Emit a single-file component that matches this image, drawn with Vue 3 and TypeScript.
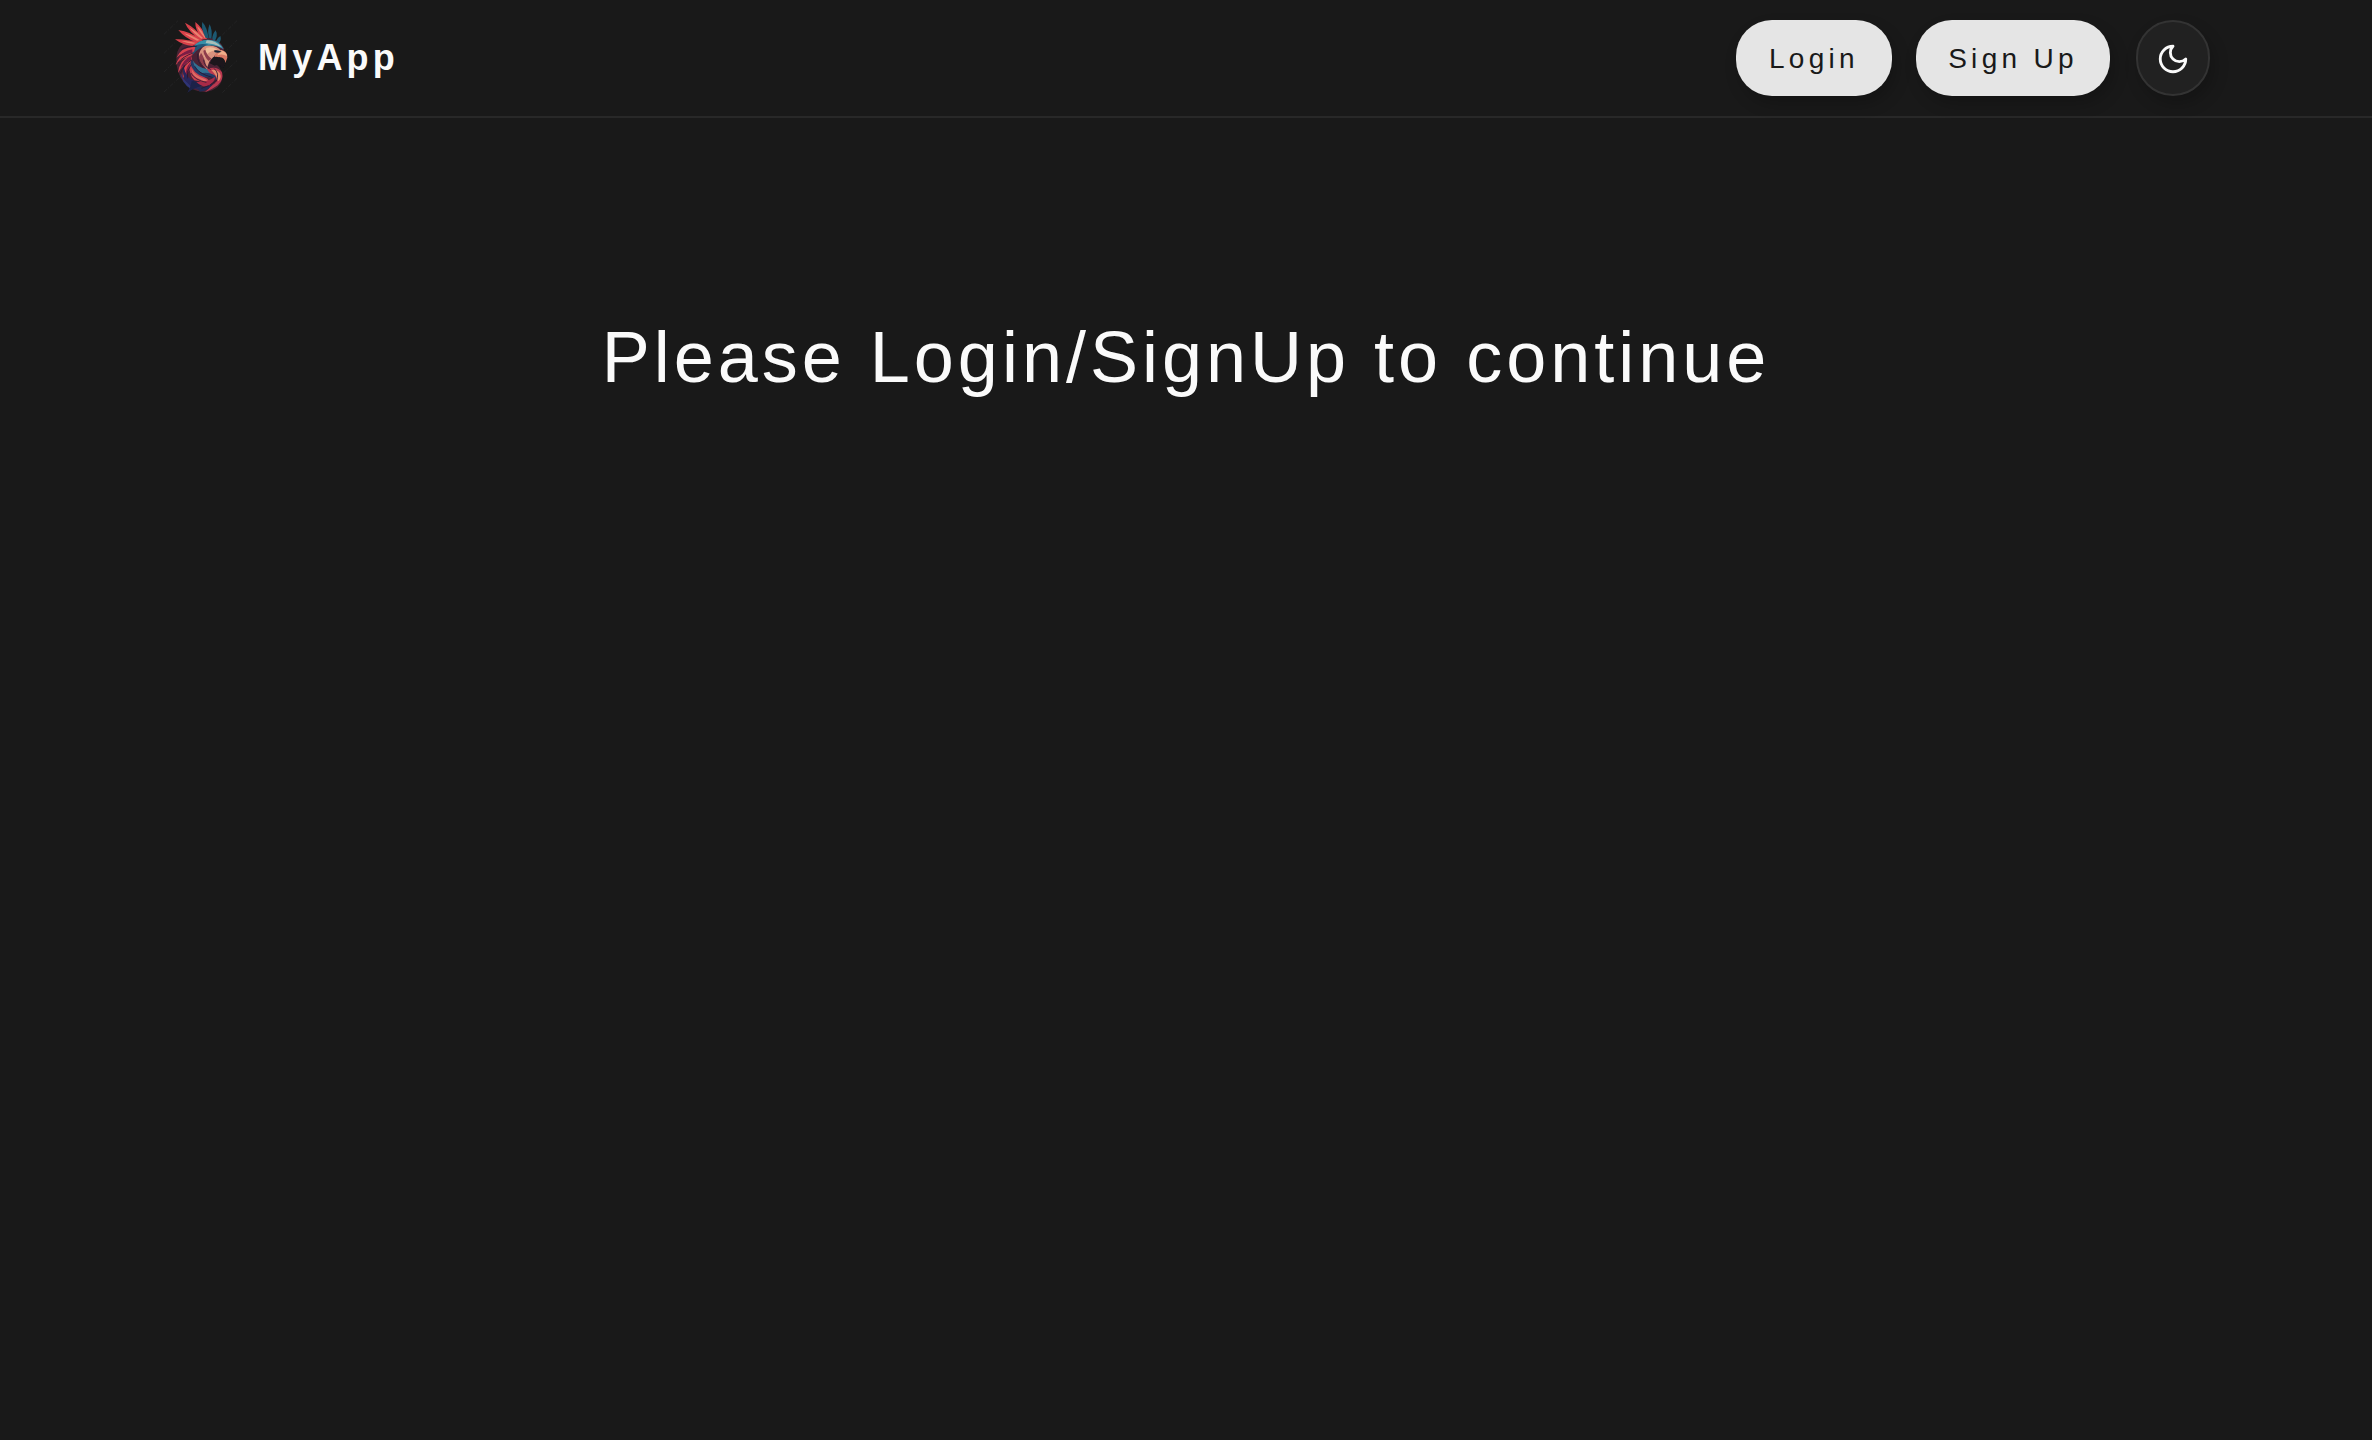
<script setup lang="ts">
interface Action {
  id: string
  label: string
}

const appName = 'MyApp'
const actions: Action[] = [
  { id: 'login', label: 'Login' },
  { id: 'signup', label: 'Sign Up' },
]
</script>

<template>
  <div class="page">
    <header class="navbar">
      <a class="brand">
        <svg class="logo" viewBox="21 30 228 228" aria-hidden="true">
          <defs>
            <filter id="soft" x="-10%" y="-10%" width="120%" height="120%">
              <feGaussianBlur stdDeviation="2" />
            </filter>
          </defs>
          <g stroke="#29292b" stroke-width="2" stroke-dasharray="12 5 3 5">
            <path d="M27 73 69 32M27 130 61 97M27 186 58 155M27 246 73 203M202 75 246 32M205 130 246 90M205 189 246 152M202 248 246 205" />
          </g>
          <g filter="url(#soft)">
            <path fill="#4b2335" d="M82 103Q112 78 154 82Q193 86 208 116L199 145Q180 137 167 151Q205 172 202 203Q197 238 151 246Q106 244 85 215Q65 190 64 151Q64 118 82 103Z" />
            <path fill="#d8414a" d="M137 90Q100 65 90 38Q120 53 148 87ZM144 88Q119 60 121 36Q143 53 156 87ZM126 98Q91 86 70 60Q105 64 143 92ZM112 108Q84 106 60 88Q93 86 131 99Z" />
            <path fill="#e98370" d="M139 86Q113 68 104 53Q124 63 144 84ZM149 84Q128 60 127 49Q141 61 153 85ZM126 92Q105 83 87 70Q109 75 134 90ZM115 101Q95 99 80 93Q97 92 122 99Z" />
            <path fill="#1f5871" d="M152 84Q137 56 142 36Q156 51 161 85ZM162 83Q156 61 164 43Q173 61 169 86ZM172 87Q172 72 182 61Q190 76 179 94ZM183 94Q188 82 196 78Q201 91 190 101Z" />
            <path fill="#3890a8" d="M116 110Q135 84 173 91Q194 94 206 118Q182 102 154 108Q128 105 111 122Z" />
            <path fill="#a8beb9" d="M155 91Q180 89 199 111Q176 100 152 99Z" />
            <path fill="#215476" d="M104 120Q123 96 160 104Q131 111 113 134Z" />
            <path fill="#d8434f" d="M121 111Q82 108 64 143Q86 123 117 125ZM113 124Q75 127 62 165Q83 143 112 136ZM108 136Q74 149 69 188Q86 161 111 149ZM105 149Q80 170 83 207Q93 181 112 164Z" />
            <path fill="#7c1f45" d="M112 118Q86 122 70 143Q94 131 112 128ZM107 137Q83 150 76 177Q94 157 109 149ZM106 157Q90 176 92 201Q101 181 114 171Z" />
            <path fill="#d9927e" d="M150 108Q184 103 199 123Q182 129 175 143Q158 151 157 180Q133 158 132 132Q136 115 150 108Z" />
            <path fill="#efbb98" d="M155 113Q177 109 187 120Q159 122 149 142Q145 124 155 113Z" />
            <path fill="#8e3c4b" d="M138 128Q148 142 153 166L162 180Q137 165 132 143ZM151 119Q155 136 170 146L161 153Q147 139 145 122Z" />
            <path fill="#d87864" d="M199 120Q218 125 217 143L211 159Q210 143 193 141L182 151Q177 138 181 132Z" />
            <path fill="#efad89" d="M198 121Q215 126 216 138Q202 130 187 136Z" />
            <path fill="#172333" d="M178 121Q191 119 200 125Q188 131 178 126Z" />
            <path fill="#1a181d" d="M174 142Q187 137 202 146Q207 151 211 160L204 174Q190 161 179 167L164 160Z" />
            <path fill="#243b68" d="M111 147Q116 177 158 184Q185 188 190 213Q165 197 139 202Q112 187 105 163Z" />
            <path fill="#337092" d="M113 151Q125 172 158 178Q179 181 188 197Q163 185 142 189Q119 181 113 151Z" />
            <path fill="#c93f51" d="M105 157Q112 190 148 202Q168 208 166 234Q145 213 118 211Q99 191 105 157Z" />
            <path fill="#df6c64" d="M110 177Q119 197 151 208Q162 215 161 223Q143 210 122 202Q110 192 110 177Z" />
            <path fill="#26265b" d="M86 162Q86 190 106 207Q128 213 142 241Q115 239 96 220Q78 196 86 162Z" />
            <path fill="#2d3576" d="M74 177Q79 205 104 225L111 240Q79 222 74 177Z" />
            <path fill="#b93850" d="M156 177Q187 166 201 187Q207 210 188 226Q170 239 150 247Q167 228 181 219Q190 199 173 193Q163 192 156 177Z" />
            <path fill="#e5896c" d="M169 180Q187 177 195 190Q201 206 189 214Q187 199 169 180Z" />
            <path fill="#1d244a" d="M110 214Q137 212 149 227Q127 227 97 248Q108 230 110 214Z" />
            <path fill="#a82c47" d="M124 216Q155 218 181 200Q178 220 154 229Q141 231 124 216Z" />
            <path fill="#202b55" d="M127 231Q157 235 174 218Q165 242 134 245Z" />
            <g fill="none" stroke="#2a1730" stroke-width="2.5" stroke-linecap="round">
              <path d="M80 118Q96 108 124 109M69 158Q84 139 112 130M76 190Q87 164 108 151M97 204Q94 182 108 164M120 170Q130 192 172 202M146 150Q147 168 166 178M128 132Q125 154 143 172M178 176Q195 190 184 214M108 190Q121 211 153 217M140 235Q166 228 184 212" />
            </g>
          </g>
        </svg>
        <span class="name">{{ appName }}</span>
      </a>
      <nav class="actions">
        <button v-for="action in actions" :key="action.id" class="pill" :class="action.id" type="button">{{ action.label }}</button>
        <button class="toggle" type="button" aria-label="Toggle theme">
          <svg class="moon" viewBox="0 0 24 24" fill="none" stroke="currentColor" stroke-width="2" stroke-linecap="round" stroke-linejoin="round">
            <path d="M12 3a6 6 0 0 0 9 9 9 9 0 1 1-9-9Z" />
          </svg>
        </button>
      </nav>
    </header>
    <main class="content">
      <h1 class="message">Please Login/SignUp to continue</h1>
    </main>
  </div>
</template>

<style>
body {
  background: #191919;
}
</style>

<style scoped>
.page {
  min-height: 1440px;
  background: #191919;
  color: #fafafa;
  font-family: "Liberation Sans", Arial, sans-serif;
}
.navbar {
  box-sizing: border-box;
  height: 118px;
  padding: 0 162px;
  display: flex;
  align-items: center;
  justify-content: space-between;
  border-bottom: 2px solid #282828;
}
.brand {
  display: flex;
  align-items: center;
  gap: 20px;
}
.logo {
  width: 76px;
  height: 76px;
}
.name {
  font-size: 36px;
  font-weight: 700;
  letter-spacing: 4.2px;
}
.actions {
  display: flex;
  align-items: center;
}
.pill {
  height: 76px;
  padding: 0;
  margin-right: 24px;
  border: 0;
  border-radius: 36px;
  background: #e5e5e5;
  color: #191919;
  font: 400 28px "Liberation Sans", Arial, sans-serif;
  letter-spacing: 4.3px;
  line-height: 78px;
  box-shadow: 4px 8px 16px rgba(0, 0, 0, 0.2);
}
.login {
  width: 156px;
}
.signup {
  width: 194px;
}
.toggle {
  box-sizing: border-box;
  width: 74px;
  height: 76px;
  margin-left: 2px;
  padding: 0;
  display: flex;
  align-items: center;
  justify-content: center;
  border: 2px solid #333;
  border-radius: 37px;
  background: #212121;
  color: #fafafa;
  box-shadow: 4px 8px 16px rgba(0, 0, 0, 0.2);
}
.moon {
  width: 34px;
  height: 34px;
  margin-top: 1px;
}
.content {
  padding-top: 197px;
}
.message {
  margin: 0;
  text-align: center;
  font-size: 72px;
  font-weight: 400;
  line-height: 84px;
  letter-spacing: 4px;
}
</style>
